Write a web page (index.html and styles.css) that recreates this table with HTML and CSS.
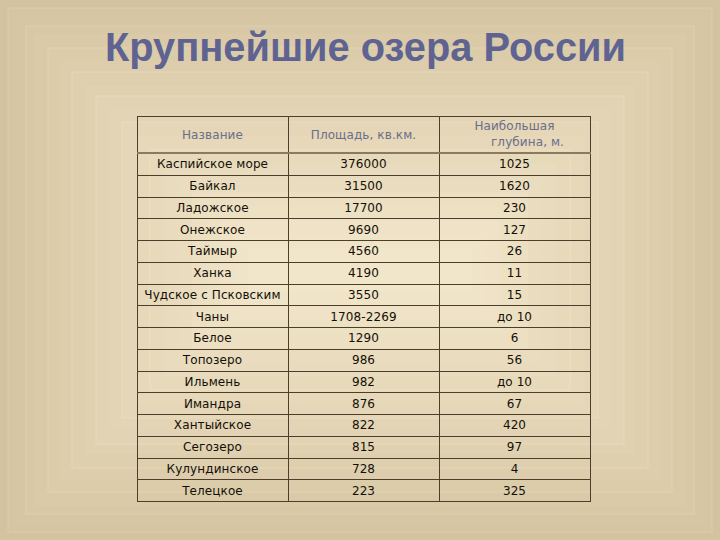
FILE: index.html
```html
<!DOCTYPE html>
<html lang="ru">
<head>
<meta charset="utf-8">
<title>Крупнейшие озера России</title>
<link rel="stylesheet" href="styles.css">
</head>
<body>
<div class="slide">
  <svg class="bg" width="720" height="540" viewBox="0 0 720 540" aria-hidden="true">
    <rect x="0" y="0" width="720" height="540" fill="#d4c3a0"/>
    <rect x="8" y="8" width="704" height="524" fill="#d6c5a2" stroke="#ddcdac" stroke-width="1"/>
    <rect x="14" y="14" width="692" height="512" fill="#d7c6a4"/>
    <rect x="26" y="26" width="668" height="488" fill="#d8c8a6" stroke="#dfd0b0" stroke-width="1"/>
    <rect x="34" y="34" width="652" height="472" fill="#dacaa8"/>
    <rect x="48" y="48" width="624" height="444" fill="#dbccaa" stroke="#e2d3b3" stroke-width="1"/>
    <rect x="60" y="60" width="600" height="420" fill="#ddcdad"/>
    <rect x="72" y="72" width="576" height="396" fill="#decfaf" stroke="#e5d7b7" stroke-width="1"/>
    <rect x="86" y="86" width="548" height="368" fill="#e0d1b1"/>
    <rect x="96" y="96" width="528" height="348" fill="#e1d3b3" stroke="#e8dabb" stroke-width="1"/>
    <rect x="110" y="110" width="500" height="320" fill="#e3d4b5"/>
    <rect x="122" y="122" width="476" height="296" fill="#e4d6b7" stroke="#eadcbe" stroke-width="1"/>
    <rect x="136" y="136" width="448" height="268" fill="#e6d8b9"/>
    <rect x="150" y="150" width="420" height="240" fill="#e7dabb" stroke="#ecdfc1" stroke-width="1"/>
    <rect x="164" y="164" width="392" height="212" fill="#e9dbbd"/>
    <rect x="178" y="178" width="364" height="184" fill="#eaddbf"/>
    <rect x="192" y="192" width="336" height="156" fill="#ecdfc2"/>
    <rect x="206" y="206" width="308" height="128" fill="#ede1c4"/>
    <rect x="220" y="220" width="280" height="100" fill="#efe2c6"/>
    <rect x="234" y="234" width="252" height="72" fill="#f0e4c8"/>
    <rect x="248" y="248" width="224" height="44" fill="#f2e6ca"/>
  </svg>
  <div class="content">
    <h1 class="title">Крупнейшие озера России</h1>
    <table class="lakes">
      <thead>
        <tr>
          <th>Название</th>
          <th>Площадь, кв.км.</th>
          <th class="depth"><span class="l1">Наибольшая</span><span class="l2">глубина, м.</span></th>
        </tr>
      </thead>
      <tbody>
        <tr><td>Каспийское море</td><td>376000</td><td>1025</td></tr>
        <tr><td>Байкал</td><td>31500</td><td>1620</td></tr>
        <tr><td>Ладожское</td><td>17700</td><td>230</td></tr>
        <tr><td>Онежское</td><td>9690</td><td>127</td></tr>
        <tr><td>Таймыр</td><td>4560</td><td>26</td></tr>
        <tr><td>Ханка</td><td>4190</td><td>11</td></tr>
        <tr><td>Чудское с Псковским</td><td>3550</td><td>15</td></tr>
        <tr><td>Чаны</td><td>1708-2269</td><td>до 10</td></tr>
        <tr><td>Белое</td><td>1290</td><td>6</td></tr>
        <tr><td>Топозеро</td><td>986</td><td>56</td></tr>
        <tr><td>Ильмень</td><td>982</td><td>до 10</td></tr>
        <tr><td>Имандра</td><td>876</td><td>67</td></tr>
        <tr><td>Хантыйское</td><td>822</td><td>420</td></tr>
        <tr><td>Сегозеро</td><td>815</td><td>97</td></tr>
        <tr><td>Кулундинское</td><td>728</td><td>4</td></tr>
        <tr><td>Телецкое</td><td>223</td><td>325</td></tr>
      </tbody>
    </table>
  </div>
</div>
</body>
</html>
```

FILE: styles.css
```css
html, body {
  margin: 0;
  padding: 0;
}

body {
  width: 720px;
  height: 540px;
  overflow: hidden;
  background: #e3d4b5;
}

.slide {
  position: relative;
  width: 720px;
  height: 540px;
  overflow: hidden;
}

.bg {
  position: absolute;
  left: 0;
  top: 0;
  display: block;
}

.content {
  position: relative;
  display: flex;
  flex-direction: column;
  align-items: center;
  padding-top: 27px;
}

.title {
  margin: 0;
  margin-left: 11px;
  font-family: "Liberation Sans", Arial, sans-serif;
  font-weight: bold;
  font-size: 39.8px;
  line-height: 40px;
  color: #5f6391;
}

.lakes {
  margin-top: 49px;
  margin-left: 7px;
  width: 452px;
  border-collapse: collapse;
  table-layout: fixed;
  font-family: "DejaVu Sans", sans-serif;
  font-size: 12px;
  letter-spacing: 0.1px;
  color: #141008;
}

.lakes th,
.lakes td {
  border: 1px solid #4c3e2a;
  text-align: center;
  padding: 0;
  width: 150px;
}

.lakes th {
  height: 35px;
  font-weight: normal;
  color: #6b6e8c;
  border-bottom: 2px solid #8a7a5e;
}

.lakes td {
  height: 20.75px;
  line-height: 14px;
}

.depth .l1,
.depth .l2 {
  display: block;
  line-height: 16px;
}

.depth .l1 {
  margin-top: -2px;
}

.depth .l2 {
  padding-left: 26px;
}
```
